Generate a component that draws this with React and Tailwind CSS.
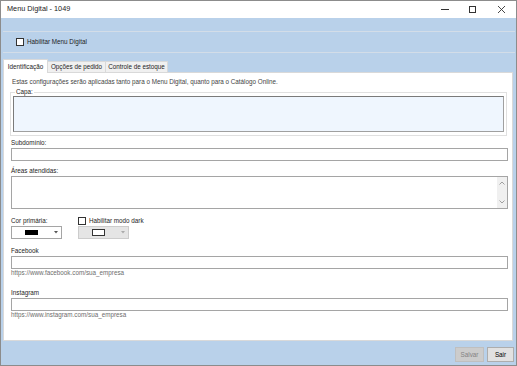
import React from "react";

const font = "font-['Liberation_Sans',Arial,sans-serif]";

function Checkbox() {
  return <span className="inline-block w-[8px] h-[8px] border border-[#333] bg-white shrink-0" />;
}

function Field({ label, className = "" }) {
  return (
    <>
      <div className={`h-[8px] leading-[8px] ${className}`}>{label}</div>
      <div className="mt-[1px] h-[13px] w-[497px] border border-[#a5a5a5] bg-white" />
    </>
  );
}

function Chevron({ up, color = "#8a8a8a" }) {
  return (
    <svg width="6" height="4" viewBox="0 0 6 4">
      <path d={up ? "M0.5 3.5 L3 1 L5.5 3.5" : "M0.5 0.5 L3 3 L5.5 0.5"} fill="none" stroke={color} strokeWidth="0.8" />
    </svg>
  );
}

export default function App() {
  const tabs = [
    { label: "Identificação", w: "w-[45px]", active: true },
    { label: "Opções de pedido", w: "w-[59px]" },
    { label: "Controle de estoque", w: "w-[63px]" },
  ];

  return (
    <div className={`w-[517px] h-[366px] flex flex-col border border-[#8c8c8c] bg-[#b9d1ea] text-[6.3px] text-[#1c1c1c] ${font}`}>
      {/* title bar */}
      <div className="h-[17px] bg-white flex items-center pl-[6px] shrink-0">
        <span className="text-[7.3px] text-[#222]">Menu Digital - 1049</span>
        <div className="ml-auto flex items-center h-full">
          <div className="w-[27px] flex justify-center">
            <svg width="9" height="9" viewBox="0 0 9 9">
              <path d="M0 4.5 H8" stroke="#333" strokeWidth="1" />
            </svg>
          </div>
          <div className="w-[27px] flex justify-center">
            <svg width="9" height="9" viewBox="0 0 9 9">
              <rect x="1.5" y="1.5" width="6" height="6" fill="none" stroke="#333" strokeWidth="1" />
            </svg>
          </div>
          <div className="w-[30px] flex justify-center">
            <svg width="9" height="9" viewBox="0 0 9 9">
              <path d="M1 1 L8 8 M8 1 L1 8" stroke="#333" strokeWidth="0.9" />
            </svg>
          </div>
        </div>
      </div>

      <div className="flex-1 flex flex-col pl-[2px] pr-[1px]">
        {/* enable panel */}
        <div className="mt-[13px] h-[22px] border-y border-[#d3dde8] flex items-center pl-[13px] gap-[3px]">
          <Checkbox />
          <span>Habilitar Menu Digital</span>
        </div>

        {/* tabs */}
        <div className="mt-[6px] h-[13px] flex items-end relative z-10">
          {tabs.map((t, i) => (
            <div
              key={t.label}
              className={`${t.w} flex items-center justify-center border border-b-0 border-[#d9d9d9] whitespace-nowrap ${
                t.active ? "h-[14px] -mb-px bg-white" : "h-[11px] bg-[#f0f0f0]"
              } ${i > 0 ? "-ml-px" : ""}`}
            >
              {t.label}
            </div>
          ))}
        </div>

        {/* tab page */}
        <div className="w-[510px] h-[269px] bg-white border border-[#d9d9d9] pl-[7px] flex flex-col">
          <div className="mt-[5px] h-[8px] leading-[8px] pl-[1px] text-[#444]">
            Estas configurações serão aplicadas tanto para o Menu Digital, quanto para o Catálogo Online.
          </div>

          <fieldset className="mt-[2px] -ml-px w-[497px] border border-[#e0e0e0] px-[2px] pb-[3px]">
            <legend className="ml-[2px] px-[1px] leading-[8px]">Capa:</legend>
            <div className="h-[36px] bg-[#eff6fe] border border-[#a0a0a0] border-t-[#7a7a7a] border-l-[#7a7a7a]" />
          </fieldset>

          <div className="mt-[3px]">
            <Field label="Subdomínio:" />
          </div>

          <div className="mt-[6px] h-[8px] leading-[8px]">Áreas atendidas:</div>
          <div className="mt-[1px] h-[33px] w-[497px] border border-[#a5a5a5] bg-white flex justify-end">
            <div className="w-[10px] bg-[#f0f0f0] flex flex-col items-center justify-between py-[4px]">
              <Chevron up />
              <Chevron />
            </div>
          </div>

          {/* color row */}
          <div className="mt-[8px] flex gap-[16px]">
            <div className="flex flex-col">
              <div className="h-[8px] leading-[8px]">Cor primária:</div>
              <div className="mt-[1px] h-[13px] w-[51px] border border-[#a5a5a5] bg-white flex items-center pl-[13px] pr-[3px]">
                <span className="w-[13px] h-[5px] bg-black" />
                <span className="ml-auto">
                  <svg width="4" height="3" viewBox="0 0 4 3">
                    <path d="M0 0 H4 L2 2.5 Z" fill="#555" />
                  </svg>
                </span>
              </div>
            </div>
            <div className="flex flex-col">
              <div className="h-[8px] flex items-center gap-[3px]">
                <Checkbox />
                <span>Habilitar modo dark</span>
              </div>
              <div className="mt-[1px] h-[13px] w-[51px] border border-[#cccccc] bg-[#e5e5e5] flex items-center pl-[13px] pr-[3px]">
                <span className="w-[13px] h-[7px] bg-white border border-[#333]" />
                <span className="ml-auto">
                  <svg width="4" height="3" viewBox="0 0 4 3">
                    <path d="M0 0 H4 L2 2.5 Z" fill="#aaa" />
                  </svg>
                </span>
              </div>
            </div>
          </div>

          <div className="mt-[8px]">
            <Field label="Facebook" />
          </div>
          <div className="h-[8px] leading-[8px] text-[#6d6d6d]">https://www.facebook.com/sua_empresa</div>

          <div className="mt-[12px]">
            <Field label="Instagram" />
          </div>
          <div className="h-[8px] leading-[8px] text-[#6d6d6d]">https://www.instagram.com/sua_empresa</div>
        </div>

        {/* footer */}
        <div className="flex-1 flex justify-end items-start pt-[6px] pr-[1px] gap-[3px]">
          <button className="w-[29px] h-[15px] bg-[#cccccc] border border-[#bfbfbf] text-[#838383] text-[6.3px]">
            Salvar
          </button>
          <button className="w-[27px] h-[15px] bg-[#e1e1e1] border border-[#adadad] text-black text-[6.3px]">
            Sair
          </button>
        </div>
      </div>
    </div>
  );
}
